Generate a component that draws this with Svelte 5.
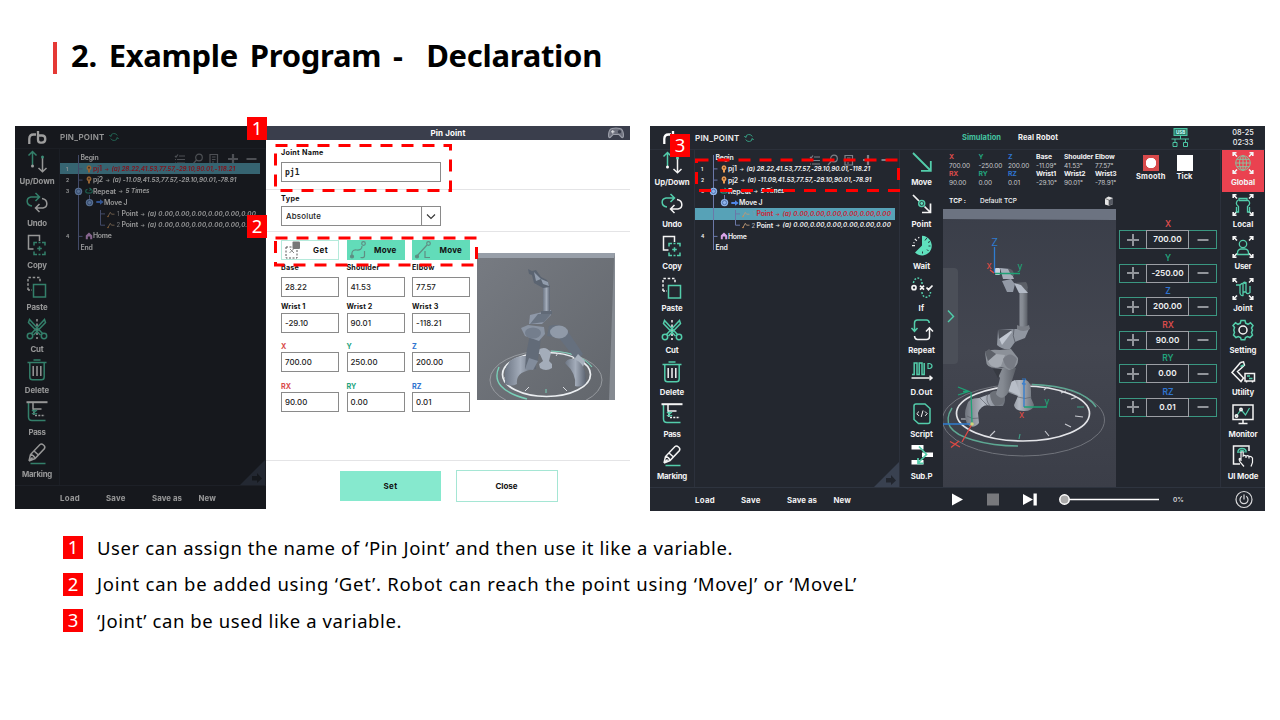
<script>
  // Spreads the letters of a label so that it fills the given width.
  function fit(node, width) {
    const natural = node.getBoundingClientRect().width;
    const count = node.textContent.length;
    if (width && count) node.style.letterSpacing = (width - natural) / count + 'px';
  }

  const editTools = [
    ['updown', 'Up/Down', 35], ['undo', 'Undo', 19.5], ['copy', 'Copy', 19.5], ['paste', 'Paste', 21],
    ['cut', 'Cut', 13], ['delete', 'Delete', 24.5], ['pass', 'Pass', 17], ['marking', 'Marking', 30]
  ];
  const commands = [
    ['move', 'Move', 20.5], ['point', 'Point', 20], ['wait', 'Wait', 17], ['if', 'If', 6],
    ['repeat', 'Repeat', 26.5], ['dout', 'D.Out', 22], ['script', 'Script', 22.5], ['subp', 'Sub.P', 21.5]
  ];
  const views = [
    ['global', 'Global', 24], ['local', 'Local', 20.5], ['user', 'User', 17], ['joint', 'Joint', 19.5],
    ['setting', 'Setting', 27], ['utility', 'Utility', 22], ['monitor', 'Monitor', 29], ['uimode', 'UI Mode', 30.5]
  ];
  const zeros = '(a) 0.00,0.00,0.00,0.00,0.00,0.00';
  const tree = [
    { x: 20.5, label: 'Begin', w: 18 },
    { n: '1', x: 25, icon: 'pin', label: 'pj1', w: 9, value: '(a) 28.22,41.53,77.57,-29.10,90.01,-118.21', vw: 123.5 },
    { n: '2', x: 25, icon: 'pin', label: 'pj2', w: 10, value: '(a) -11.09,41.53,77.57,-29.10,90.01,-78.91', vw: 124 },
    { n: '3', x: 25, icon: 'loop', label: 'Repeat', w: 23, value: '5 Times', vw: 24 },
    { x: 36, icon: 'go', label: 'Move J', w: 23.5 },
    { x: 47, icon: 'path', idx: '1', label: 'Point', w: 16.5, value: zeros, vw: 108.5 },
    { x: 47, icon: 'path', idx: '2', label: 'Point', w: 16.5, value: zeros, vw: 108.5 },
    { n: '4', x: 25, icon: 'home', label: 'Home', w: 18.5 },
    { x: 20.5, label: 'End', w: 12 }
  ];
  const files = [['Load', 20, 46], ['Save', 19.5, 46], ['Save as', 30, 46.5], ['New', 17.5, 20]];
  const readouts = [
    ['X', '700.00', 'RX', '90.00', 'red'], ['Y', '-250.00', 'RY', '0.00', 'green'], ['Z', '200.00', 'RZ', '0.01', 'blue'],
    ['Base', '-11.09°', 'Wrist1', '-29.10°', ''], ['Shoulder', '41.53°', 'Wrist2', '90.01°', ''], ['Elbow', '77.57°', 'Wrist3', '-78.91°', '']
  ];
  const jogs = [
    ['X', '700.00', 'red'], ['Y', '-250.00', 'green'], ['Z', '200.00', 'blue'],
    ['RX', '90.00', 'red'], ['RY', '0.00', 'green'], ['RZ', '0.01', 'blue']
  ];
  const fields = [
    ['Base', '28.22', '', 18], ['Shoulder', '41.53', '', 33], ['Elbow', '77.57', '', 22.5],
    ['Wrist 1', '-29.10', '', 24.5], ['Wrist 2', '90.01', '', 26], ['Wrist 3', '-118.21', '', 26.5],
    ['X', '700.00', 'red', 0], ['Y', '250.00', 'green', 0], ['Z', '200.00', 'blue', 0],
    ['RX', '90.00', 'red', 0], ['RY', '0.00', 'green', 0], ['RZ', '0.01', 'blue', 0]
  ];
  const notes = [
    ['User can assign the name of ‘Pin Joint’ and then use it like a variable.', 636],
    ['Joint can be added using ‘Get’. Robot can reach the point using ‘MoveJ’ or ‘MoveL’', 760],
    ['‘Joint’ can be used like a variable.', 305]
  ];
</script>

{#snippet corners()}
  <g class="w" stroke-width="1.600"><path d="M5 5.500L1.500 2M1.200 5V1.800H4.500M17 5.500L20.500 2M17.500 1.800H20.800V5M5 18.500L1.500 22M1.200 19V22.200H4.500M17 18.500L20.500 22M20.800 19V22.200H17.500" /></g>
{/snippet}

{#snippet icon(name)}
  <svg class="icon" viewBox="0 0 22 22" width="22" height="22">
    {#if name === 'updown'}
      <g class="g"><path d="M6.500 15V1.500M2.500 5.500L6.500 1.500L10.500 5.500" /></g>
      <g class="w"><path d="M16.500 8V21.500M12.500 18L16.500 21.800L20.500 18" /></g>
      <circle class="wf" cx="6.500" cy="16" r="1.500" /><circle class="gf" cx="16.500" cy="7" r="1.500" />
    {:else if name === 'undo'}
      <g class="g"><path d="M6 14C0 13.500-.5 6 5 5H13.500M9.500 1L13.500 5L9.500 9" /></g>
      <g class="w"><path d="M16 6.500C22 7.500 22.500 15 17 16H9.500M13.500 12L9.500 16L13.500 20" /></g>
    {:else if name === 'copy'}
      <g class="w"><path d="M7.500 15H2.500V1.500H13.500V7" /></g>
      <g class="g"><path d="M8 11.500V8.500H11M16 8.500H19V11.500M19 17.500V20.500H16M11 20.500H8V17.500M12.500 8.500H14.500M12.500 20.500H14.500M13.500 12.200V16.800M11.200 14.500H15.800" /></g>
    {:else if name === 'paste'}
      <g class="w"><path d="M2 14V1.500H14V6.500" stroke-dasharray="2.500 1.800" /><path d="M2 14H6" stroke-dasharray="2 1.500" /></g>
      <g class="g"><rect x="7.500" y="8.500" width="12" height="12.500" /></g>
    {:else if name === 'cut'}
      <path class="w" d="M11 1V21" stroke-dasharray="2.500 2" />
      <g class="g"><circle cx="4" cy="18" r="2.700" /><circle cx="18" cy="18" r="2.700" /><path d="M5.500 15.500L18.500 1.500L19.500 4.500L7.500 17M16.500 15.500L3.500 1.500L2.500 4.500L14.500 17" /></g>
    {:else if name === 'delete'}
      <g class="g"><path d="M1.500 3.500H20.500M7.500 1H14.500M3.800 4V18Q3.800 20.800 6.500 20.800H15.500Q18.200 20.800 18.200 18V4" /></g>
      <path class="w" d="M7.200 7V17M11 7V17M14.800 7V17" />
    {:else if name === 'pass'}
      <path class="g" d="M2.500 2V16Q2.500 19.500 6 19.500H19.500" />
      <path class="w" d="M.5 1.200H21.500" stroke-width="2" /><path class="w" d="M7 2V8H15.500M8 8V14" />
      <path class="w" d="M9 14.500H19" stroke-dasharray="2 1.300" /><path class="g" d="M6 9L11 13M11 9L6 13M8.500 8.500V14" />
    {:else if name === 'marking'}
      <g class="w"><path d="M3 18L4.500 11.500L14 1.500Q15.500.5 17.500 2T18.500 5.500L9 15.500L3 18M4.500 11.500Q8 12 9 15.500M8 8L12.500 12M3 18L6.500 14.500" /></g>
      <path class="g" d="M4.500 20.500H19.500" />
    {:else if name === 'move'}
      <path class="g" d="M2 2L19.500 19.500M19.800 10V19.800H10" stroke-width="1.800" />
    {:else if name === 'point'}
      <path class="w" d="M2 2L8 8M13.500 13.500L19 19M19.500 10.500V19.500H11" stroke-width="1.700" />
      <circle class="g" cx="10.700" cy="10.500" r="3" /><circle class="gf" cx="10.700" cy="10.500" r="1.400" />
    {:else if name === 'wait'}
      <path class="gf" d="M11 .8A9.800 9.800 0 1 1 4 17.500L11 10.600Z" />
      <path class="w" d="M1 10.600H4M3.800 3.800L5.800 5.800M2.500 7.500L3.500 8M7.500 2L8 3.200" stroke-width="1.200" />
      <path d="M14 5.500L16 2.700M17 7.500L19 6.500M17.500 11H19.500M16 14.500L17.500 16M11.500 16.500V18.500" stroke="#23272f" stroke-width=".9" />
    {:else if name === 'if'}
      <path class="g" d="M2.500 6C3-.5 11-.5 11 6V15C11 22 19.500 22 19.500 15" stroke-dasharray="1.800 1.500" />
      <rect x="0" y="7.500" width="22" height="6.500" fill="#23272f" />
      <g class="w" stroke-width="1.700"><circle cx="3" cy="10.700" r="2" /><path d="M9 8.700L13 12.700M13 8.700L9 12.700M15.500 10.500L17.500 12.700L21.500 8.500" /></g>
    {:else if name === 'repeat'}
      <g class="g"><path d="M3.500 12V4Q3.500 1 6.500 1H15.500Q18 1 18.300 4M.5 9L3.500 12.300L6.500 9" /></g>
      <g class="w"><path d="M18.500 9V17.500Q18.500 20.500 15.500 20.500H6.500Q3.800 20.500 3.500 17M15 12.500L18.500 8.800L22 12.500" /></g>
    {:else if name === 'dout'}
      <path class="g" d="M1 13.500H3.200V2H6V13.500H8.200V2H11V13.500H13.200V2" /><path class="g" d="M17 2.500V7.500H18.500Q21 7 21 5T18.500 2.500Z" stroke-width="1.200" />
      <path class="w" d="M.5 17H21M18.500 14.800L21 17L18.500 19.200" />
    {:else if name === 'script'}
      <path class="g" d="M3 3Q3 1 5 1H14L19 5.500V18.500Q19 20.500 17 20.500H7.500L3 16.500Z" />
      <path class="w" d="M8 8.500L5.800 10.700L8 12.900M14 8.500L16.200 10.700L14 12.900M12 7.500L10.200 14" stroke-width="1" />
    {:else if name === 'subp'}
      <g class="wf"><rect x=".5" y="0" width="12" height="4.500" /><rect x="11" y="7.500" width="11" height="4.500" /><rect x=".5" y="15" width="12" height="4.500" /></g>
      <path class="g" d="M8 1.500L15.500 9.500L7 18M7 13V18.300H12.500" stroke-width="1.700" />
    {:else if name === 'global'}
      {@render corners()}
      <g stroke="#8fbf9d" fill="none" stroke-width="1"><circle cx="11" cy="12" r="7.300" /><ellipse cx="11" cy="12" rx="3.500" ry="7.300" /><path d="M11 4.700V19.300M3.700 12H18.300M4.800 8.300H17.200M4.800 15.700H17.200" /></g>
    {:else if name === 'local'}
      {@render corners()}
      <g class="g" stroke-width="1.300"><path d="M7 7.500V5.500H15V7.500H7M7 6.500C3.500 8.500 3.500 11.500 6.500 13.500V19H4.500V14M15 6.500C18.500 8.500 18.500 11.500 15.500 13.500V19H17.500V14" /></g>
    {:else if name === 'user'}
      {@render corners()}
      <g class="g" stroke-width="1.300"><circle cx="11" cy="9" r="3.700" /><path d="M5.500 19.500V18Q5.500 14.500 9 14H13Q16.500 14.500 16.500 18V19.500Z" /></g>
    {:else if name === 'joint'}
      {@render corners()}
      <g class="g" stroke-width="1.300"><path d="M4 8H8V16Q8.500 19 11 18.500V7Q11.500 4.500 14 5.500V15Q15 18 18 15.500V9M8 8Q10 5.500 14 6.500M11 15H14" /></g>
    {:else if name === 'setting'}
      <path class="g" d="M9 1.500H13L13.700 4.300L16 5.300L18.500 3.800L21 6.500L19.500 9L20.500 11L19.500 13.500L20.500 16L18 18.500L15.500 17.500L13.500 18.500L12.800 20.800H9.200L8.500 18.500L6.300 17.500L4 18.500L1.500 16L2.500 13.500L1.800 11L2.500 8.500L1 6.500L3.500 3.800L6 5.300L8.300 4.300Z" />
      <circle class="w" cx="11" cy="11" r="4" />
    {:else if name === 'utility'}
      <path class="w" d="M8.500 1.500L11.500.8L12.500 4L9.500 7L5.500 10.500L11.500 17L9 20.500L0 11.500L8.500 1.500M13 12.500H22.500V20H13ZM14.500 20V21.500M20.500 20V21.500" />
      <path class="g" d="M8.500 5.500L12 4M15 15H18M17 17.500H20.500" />
    {:else if name === 'monitor'}
      <path class="w" d="M1 2H21V16.500H1ZM11 17V20M6.500 20.500H15.500" />
      <path class="g" d="M4.500 13L9 6.500L13.500 12L17.500 5" stroke-width="1.200" /><circle class="w" cx="4.500" cy="13" r="1.200" /><circle class="w" cx="9" cy="6.500" r="1.200" />
    {:else if name === 'uimode'}
      <path class="w" d="M8 19H1.500V1H17V6" />
      <path class="g" d="M6 8Q5.500 3.500 10 3.500T14 7.500M8 8Q8 5.500 10 5.500T12 7.500" />
      <path class="w" d="M9 16V7.500Q10 6 11.200 7.500V11Q12.500 9.800 14 11.200Q15.500 10 17 11.500Q19 10.800 20.500 13V17.500L19 21.500M9.500 14.500L7.500 13.500Q6.500 14.500 8.500 17.500L12 21.500M14 11V13M17 11.500V13.500" stroke-width="1.200" />
    {/if}
  </svg>
{/snippet}

{#snippet toolColumn(items, cls)}
  <nav class="tools {cls}">
    {#each items as [name, label, w]}
      <div class="tool" class:on={name === 'global'}>
        {@render icon(name)}
        <span><b use:fit={w}>{label}</b></span>
      </div>
    {/each}
  </nav>
{/snippet}

{#snippet glyph(name)}
  <svg class="glyph" viewBox="0 0 8 8" width="8" height="8">
    {#if name === 'pin'}
      <path d="M4 .2A2.600 2.600 0 0 1 5.600 4.700L5 5.200V7.600H3V5.200L2.400 4.700A2.600 2.600 0 0 1 4 .2" fill="#ee9f55" /><circle cx="4" cy="2.700" r=".9" fill="#6a4020" />
    {:else if name === 'loop'}
      <path d="M2.500 2.300Q.7 2.500.7 4.200T2.500 6H5.500Q7.300 6 7.300 4.200T5.500 2.300M4.500 1L6 2.300L4.500 3.600" fill="none" stroke="#2fa486" stroke-width="1.100" />
    {:else if name === 'go'}
      <path d="M.3 3.100H4V1.200L7.600 4L4 6.800V4.900H.3Z" fill="#4f86e8" />
    {:else if name === 'path'}
      <path d="M1 6.500L3.300 2.300L4.500 4.200H7.500" fill="none" stroke="#b79a7a" stroke-width=".9" /><circle cx="1" cy="6.500" r=".8" fill="#d08a4a" />
    {:else if name === 'home'}
      <path d="M.8 7.300V3.500L4 .6L7.200 3.500V7.300H5.200V4.500H2.800V7.300Z" fill="#d9a3e6" />
    {/if}
  </svg>
{/snippet}

{#snippet program(selected)}
  <section class="program">
    <div class="treebar">
      <svg viewBox="0 0 84 12" width="84" height="12" fill="none" stroke="#7c8087" stroke-width="1.200">
        <path d="M1 3L2 4L4 1.500M5 3H11M3 6.500H11M3 10H11M1 6.500H2M1 10H2" />
        <circle cx="25" cy="4.500" r="3.300" /><path d="M22.500 7L19 11" />
        <path d="M36 1.500H43.500V11H36ZM38 4H41.500M38 6.500H41.500M38 9H40" />
        <path d="M59 1V11M54 6H64M72.500 6H82.500" stroke-width="2.200" />
      </svg>
    </div>
    <div class="rows">
      {#each tree as row, i}
        <div class="row" class:selected={i === selected}>
          <span class="num">{row.n ?? ''}</span>
          <div class="entry" style="margin-left:{row.x - 18}px">
            {#if row.icon}{@render glyph(row.icon)}{/if}
            {#if row.idx}<i class="idx">{row.idx}</i>{/if}
            <span class="name"><b use:fit={row.w}>{row.label}</b></span>
            {#if row.value}
              <span class="arrow">→</span>
              <span class="val"><em use:fit={row.vw}>{row.value}</em></span>
            {/if}
          </div>
        </div>
      {/each}
      <svg class="lines" viewBox="0 0 60 104" width="60" height="104" fill="none" stroke="#6b78a8" stroke-width="1">
        <path d="M18.500 5V100M19 18.900H22.500M19 30.100H22.500M19 86.400H22.500M29.500 45V50M40.500 60V75.200H45M40.500 63.900H45" />
        {#each [[18.500, 41.400], [29.500, 52.600]] as [cx, cy]}
          <g stroke="none"><circle {cx} {cy} r="3.700" fill="#8fb4ea" /><circle {cx} {cy} r="2.100" fill="none" stroke="#3a5a98" stroke-width=".7" /></g>
        {/each}
      </svg>
    </div>
    <svg class="fold" viewBox="0 0 25 25" width="25" height="25"><path d="M25 0V25H0Z" fill="#394150" /><path d="M12 16H17V13L22 18.500L17 23V20.500H12Z" fill="#22262e" /></svg>
  </section>
{/snippet}

{#snippet brand()}
  <div class="brand">
    <svg viewBox="0 0 19 13" width="19" height="13" fill="none" stroke="#fff" stroke-width="2.300"><path d="M1.300 13V8Q1.300 3.500 5.500 3.500H8M10 0V8.500M10 4.500H14Q17.300 4.500 17.300 8T14 11.700H12.500Q10 11.700 10 8.500" /></svg>
  </div>
  <span class="file"><b use:fit={44.5}>PIN_POINT</b></span>
  <svg class="sync" viewBox="0 0 10 10" width="10" height="10" fill="none" stroke="#35997f" stroke-width="1"><path d="M1.500 4A3.700 3.700 0 0 1 8.300 3.500M8.500 6A3.700 3.700 0 0 1 1.700 6.500M.3 3L1.500 4.500L3 3.500M9.700 7L8.500 5.500L7 6.500" /></svg>
{/snippet}

{#snippet fileMenu()}
  <div class="files">
    {#each files as [label, w, step]}<span style="width:{step}px"><b use:fit={w}>{label}</b></span>{/each}
  </div>
{/snippet}

{#snippet badge(n, cls)}<span class="badge {cls}">{n}</span>{/snippet}

<main class="slide">
  <h1><span use:fit={531}>2. Example Program -&nbsp; Declaration</span></h1>

  <div class="shots">
    <figure class="shot first">
      <div class="dimmed app">
        <header>{@render brand()}</header>
        <div class="body">{@render toolColumn(editTools, 'edit')}{@render program(1)}</div>
        <footer>{@render fileMenu()}</footer>
      </div>
      <div class="dialog">
        <div class="caption">
          <span></span><b use:fit={35}>Pin Joint</b>
          <svg viewBox="0 0 16 12" width="16" height="12"><path d="M4 1.500Q8 .5 12 1.500Q15 2 15.500 8Q15.500 11 13.800 10.500L11 7.500H5L2.200 10.500Q.5 11 .5 8Q1 2 4 1.500" fill="#6d707d" stroke="#9a9da8" stroke-width="1.200" /><path d="M3 4.800H6.500M4.800 3V6.600" stroke="#e0e1e5" /><circle cx="11.500" cy="4.800" r="1.700" fill="#3a3e4c" /></svg>
        </div>
        <div class="block joint">
          <label><b use:fit={42.5}>Joint Name</b></label>
          <div class="input mono">pj1</div>
        </div>
        <div class="block type">
          <label><b use:fit={19}>Type</b></label>
          <div class="input select"><span use:fit={35}>Absolute</span><svg viewBox="0 0 19 18" width="19" height="18" fill="none" stroke="#333" stroke-width="1.100"><path d="M.5 0V18" stroke="#8a8a8a" /><path d="M6 7.500L10 11.500L14 7.500" /></svg></div>
        </div>
        <div class="pose">
          <div class="left">
            <div class="actions">
              <button class="get"><svg viewBox="0 0 20 20" width="20" height="20"><rect x="2" y="7" width="11" height="11" fill="none" stroke="#555" stroke-dasharray="2 1.500" /><rect x="8.500" y="1.500" width="7.500" height="7.500" rx="1" fill="#777" /><path d="M5.500 13L9.500 9M6 9L10 13" stroke="#888" /></svg><b use:fit={15}>Get</b></button>
              <button><svg viewBox="0 0 20 20" width="20" height="20" fill="none" stroke="#5f8e83" stroke-width="1.200"><path d="M3 16Q2 9.500 7.500 10T13 6M15.500 11V16Q15.500 18 11.500 17.500" /><circle cx="14.500" cy="3.500" r="1.800" /><circle cx="3" cy="16.500" r="1.500" fill="#5f8e83" /></svg><b use:fit={22.5}>Move</b></button>
              <button><svg viewBox="0 0 20 20" width="20" height="20" fill="none" stroke="#5f8e83" stroke-width="1.200"><path d="M3 16L13 5M11 11V17.500H16" /><circle cx="14.500" cy="3.500" r="1.800" /><circle cx="3" cy="16.500" r="1.500" fill="#5f8e83" /></svg><b use:fit={22.5}>Move</b></button>
            </div>
            <div class="fields">
              {#each fields as [label, value, tone, w]}
                <div class="field"><label class={tone}><b use:fit={w}>{label}</b></label><div class="input">{value}</div></div>
              {/each}
            </div>
          </div>
          <svg class="render" viewBox="477 253 138 147" width="138" height="147">
            <defs>
              <linearGradient id="bgA" x1="0" y1="0" x2="1" y2="1"><stop offset="0" stop-color="#777b82" /><stop offset="1" stop-color="#62666c" /></linearGradient>
              <linearGradient id="mA" x1="0" x2="1"><stop offset="0" stop-color="#6e7785" /><stop offset=".5" stop-color="#a3acba" /><stop offset="1" stop-color="#5b6370" /></linearGradient>
            </defs>
            <rect x="477" y="253" width="138" height="147" fill="url(#bgA)" />
            <path d="M477 253H615V258H477Z" fill="#989fa9" /><path d="M615 253V400H609L614 258Z" fill="#858a91" />
            <g fill="none">
              <ellipse cx="546" cy="380" rx="56" ry="29" stroke="#a2a6ab" stroke-width=".8" />
              <path d="M499 367Q489 389 527 399" stroke="#79d0b8" stroke-width="1.400" /><path d="M551 351Q580 352 592 367" stroke="#79d0b8" stroke-width="1.200" />
              <ellipse cx="546.500" cy="374.500" rx="44" ry="22" stroke="#eceff2" stroke-width="1.700" />
              <path d="M525 391L529 387M563 387L567 391M504 378H509M556 356L558 353M571 360L574 358" stroke="#d8dbe0" /><path d="M546 389V393" stroke="#79d0b8" />
            </g>
            <path d="M538 350Q546 345 551 353L549 361L552 364V368Q546 372 540 368L539 364L543 361Z" fill="#a4adba" />
            <path d="M549 326Q560 323 567 330L583 354L577 361L559 338L547 336Z" fill="#66707e" /><ellipse cx="559" cy="332" rx="9" ry="6.500" fill="#909aa8" />
            <path d="M578 354L585 361L583 367L573 361Z" fill="#a9b2be" />
            <path d="M565 363Q568 357 576 360Q586 364 586 383Q582 388 575 386Q577 374 565 363" fill="url(#mA)" />
            <path d="M523 356Q508 357 505 371V384Q511 387 517 384Q515 371 536 369L534 357Z" fill="url(#mA)" />
            <path d="M530 334L541 338L538 360Q532 370 525 369L526 355Z" fill="#626b78" /><path d="M529 358L538 361L533 370L525 369Z" fill="#828c9b" />
            <path d="M521 328L528 325L544 327L545 334L539 341L525 336Z" fill="#8a94a3" /><ellipse cx="533" cy="333" rx="8" ry="5.500" fill="#747e8d" />
            <path d="M530 315L551 310V315L542 324L529 324Z" fill="#8e98a8" /><path d="M538 314L530 324L544 322L551 314Z" fill="#6a7482" />
            <rect x="543" y="286" width="7" height="27" fill="url(#mA)" /><path d="M541 311H552V314H541Z" fill="#616a77" />
            <path d="M528 269L532 271L536 270L541 277L547 280L550 287L543 288L534 283L532 275L529 274Z" fill="#5b6471" /><path d="M534 272L541 279L536 281ZM541 279L548 282L549 286L543 284Z" fill="#929dad" />
          </svg>
        </div>
        <div class="confirm"><button class="set"><b use:fit={14}>Set</b></button><button class="close"><b use:fit={22}>Close</b></button></div>
      </div>
      <svg class="marks" viewBox="0 0 615 383" width="615" height="383" fill="none" stroke="#f00" stroke-width="3" stroke-dasharray="12 9">
        <rect x="260.500" y="19.500" width="175" height="45" /><rect x="260.500" y="112" width="201" height="27" />
      </svg>
      {@render badge(1, 'b1')}{@render badge(2, 'b2')}
    </figure>

    <figure class="shot second">
      <div class="app">
        <header>
          {@render brand()}
          <div class="modes"><b class="sim" use:fit={39}>Simulation</b><b use:fit={40}>Real Robot</b></div>
          <svg class="usb" viewBox="0 0 20 20" width="20" height="20" fill="none" stroke="#4cc5a4" stroke-width="1"><rect x="4" y=".5" width="13" height="7" fill="#2b7c68" /><path d="M10.500 8V11M1.500 11H19M5 11V14.500M15.500 11V14.500M3 14.500H7V18.500H3ZM13.500 14.500H17.500V18.500H13.500Z" /><text x="10.500" y="6">USB</text></svg>
          <div class="clock"><span>08-25</span><span>02:33</span></div>
        </header>
        <div class="body">
          {@render toolColumn(editTools, 'edit')}
          {@render program(5)}
          {@render toolColumn(commands, 'cmd')}
          <section class="stage">
            <div class="readouts">
              <div class="grid">
                {#each readouts as [a, va, b, vb, tone]}
                  <div><b class={tone}>{a}</b><span>{va}</span><b class={tone}>{b}</b><span>{vb}</span></div>
                {/each}
              </div>
              <div class="tcp"><b use:fit={17}>TCP :</b><span use:fit={37}>Default TCP</span><svg viewBox="0 0 10 10" width="10" height="10"><path d="M1 2.500L4.500.5L9 2V8L5 9.800L1 8.500Z" fill="#e5e5e5" /><path d="M5 4L9 2V8L5 9.800Z" fill="#565a63" /><path d="M1 2.500L5 4V9.500" stroke="#444" stroke-width=".6" fill="none" /></svg></div>
            </div>
            <svg class="view" viewBox="943 209 173 278" width="173" height="278">
              <defs>
                <linearGradient id="bgB" x1="0" y1="0" x2="0" y2="1"><stop offset="0" stop-color="#3a3e49" /><stop offset=".5" stop-color="#434650" /><stop offset="1" stop-color="#3b3e48" /></linearGradient>
                <linearGradient id="mB" x1="0" x2="1"><stop offset="0" stop-color="#70757e" /><stop offset=".45" stop-color="#b3b9c3" /><stop offset="1" stop-color="#6a6f78" /></linearGradient>
                <linearGradient id="mC" x1="0" x2="1"><stop offset="0" stop-color="#8b9099" /><stop offset=".4" stop-color="#858a92" /><stop offset="1" stop-color="#5b5f67" /></linearGradient>
              </defs>
              <rect x="943" y="209" width="173" height="278" fill="url(#bgB)" /><path d="M943 209H1116V220L943 219Z" fill="#6c7381" />
              <g fill="none">
                <ellipse cx="1023.500" cy="420" rx="81" ry="36" stroke="#70737b" stroke-width="1" />
                <path d="M952 408Q938 430 973 440Q993 446 1018 446" stroke="#5da893" stroke-width="1.400" /><path d="M1032 384.500Q1082 386 1096 407" stroke="#5da893" stroke-width="1.400" />
                <ellipse cx="1023" cy="413.500" rx="66.500" ry="27.500" stroke="#e3e4e8" stroke-width="1.700" />
                <path d="M990 436L995 431M1045 431L1049 436M1065 424L1071 427M1075 416L1083 417M1071 399L1077 397M1061 393L1066 391M1044 390L1047 387M961 419H967" stroke="#c8cad0" stroke-width="1.100" /><path d="M1020 434L1019 439M1077 407H1084" stroke="#3f9c84" stroke-width="1.200" />
              </g>
              <path d="M1007 384L1016 380H1026Q1031 382 1031 391V398L1034 405Q1033 411 1024 411Q1015 411 1014 405L1018 396L1007 392Z" fill="url(#mB)" /><path d="M1007 384L1015 380L1021 396L1008 391Z" fill="#b8bec8" /><path d="M1018 397Q1025 400 1032 397" stroke="#5a5e66" fill="none" stroke-width=".6" />
              <path d="M967 405Q968 398 979 398L987 395L994 393L1003 392Q1007 400 1003 406L991 406Q982 403 978 413L979 423Q973 430 967 424Q963 414 967 405" fill="url(#mB)" /><path d="M988 394Q985 400 990 406M967 416Q972 420 979 418M980 398L988 406" stroke="#555961" fill="none" stroke-width=".6" />
              <path d="M990 393Q998 387 1005 397Q1004 406 995 406Q990 401 990 393" fill="#6c7078" />
              <path d="M994 369L1012 367L1016 368L1008 393Q1002 402 996 394L1000 378Z" fill="url(#mC)" /><path d="M993 369L1002 369L998 378Z" fill="#373a42" />
              <path d="M985 352Q989 349 1000 350L1011 349L1018 358Q1019 368 1009 370Q1003 366 998 368Q986 369 986 360Z" fill="#8c9199" /><path d="M988 361L996 354L1005 355L1001 366Q992 370 988 361" fill="#a4a9b1" /><path d="M1003 359Q1010 350 1017 359L1014 368Q1006 372 1003 359" fill="#777b84" /><path d="M985 352L989 349L996 354L988 361Z" fill="#5d6169" />
              <path d="M998 330L1014 329L1029 329L1025 338L1015 342L1010 349Q1002 350 997 345Z" fill="#9096a0" /><path d="M1012 332L1002 345L999 338L1010 330Z" fill="#c1c7d1" /><path d="M998 330H1012L999 339Z" fill="#4e525b" /><path d="M1014 329Q1012 336 1015 342" stroke="#4e525b" fill="none" stroke-width=".7" />
              <rect x="1019.500" y="290" width="8" height="38" fill="url(#mC)" /><path d="M1017 325Q1023 328 1029 325L1030 329Q1023 333 1017 329Z" fill="#7a7e86" />
              <path d="M1014 283L1026 282Q1029 286 1027 291L1018 286Z" fill="#5b5f67" /><path d="M1014 283L1021 285L1028 293H1019Z" fill="#b3bac6" />
              <path d="M1002 281L1011 279L1015 284L1013 292H1007Z" fill="#9299a5" /><path d="M1000 268L1010 269L1014 279L1003 279Z" fill="#a6adb9" /><path d="M1008 269Q1014 268 1014 276L1011 275Z" fill="#5b5f67" /><rect x="995" y="268" width="5" height="7" rx="1" fill="#cbd3df" />
              <g fill="none" stroke-width="1.300">
                <path d="M994.500 247V273M943 424H972M1024 380V407" stroke="#2f7cd0" /><path d="M995 273.500H1020M971 392L972 423M1024 407H1047" stroke="#1fa276" /><path d="M994 273L990 270M971.500 425L962 442" stroke="#dc4a44" />
                <path d="M950 441.500L960 447M951 447.500L959 441" stroke="#dc4a44" /><path d="M958 387L969 391.500L958 395M969 391.500H963" stroke="#1fa276" />
                <path d="M1022 379H1026L1022 384H1026" stroke="#2f7cd0" stroke-width=".9" />
              </g>
              <circle cx="972" cy="424" r="1.800" fill="#cfd57a" />
              <g class="axis"><text x="991.500" y="246" fill="#2f7cd0">Z</text><text x="986.500" y="269" fill="#dc4a44">x</text><text x="1017.500" y="270" fill="#1fa276">y</text><text x="1044.500" y="405" fill="#1fa276">y</text><text x="1019" y="418" fill="#dc4a44">x</text></g>
              <path d="M943 268H954Q958 268 958 272V360Q958 364 954 364H943Z" fill="#4b4f58" /><path d="M948 310.500L953.500 316.500L948 322" fill="none" stroke="#4fceab" stroke-width="1.400" />
            </svg>
          </section>
          <section class="jog">
            <div class="options"><div><i class="smooth"></i><b use:fit={29.5}>Smooth</b></div><div><i></i><b use:fit={16}>Tick</b></div></div>
            {#each jogs as [axis, value, tone]}
              <div class="axisrow"><b class={tone}>{axis}</b>
                <div class="stepper"><svg viewBox="0 0 12 12" width="12" height="12"><path d="M6 0V12M0 6H12" /></svg><strong>{value}</strong><svg viewBox="0 0 12 12" width="12" height="12"><path d="M.5 6H11.500" /></svg></div>
              </div>
            {/each}
          </section>
          {@render toolColumn(views, 'nav')}
        </div>
        <footer>
          {@render fileMenu()}
          <svg class="player" viewBox="940 488 325 23" width="325" height="23">
            <path d="M952 493.500L963 499.500L952 505.500Z" fill="#fff" /><rect x="987" y="493.500" width="12" height="12" fill="#77787c" />
            <path d="M1023 494L1033 499.500L1023 505Z" fill="#fff" /><rect x="1033.500" y="493.500" width="3.300" height="12" fill="#fff" />
            <path d="M1065 499.500H1159" stroke="#fff" stroke-width="1.500" /><circle cx="1064.500" cy="499.500" r="4.700" fill="#aaa" stroke="#fff" stroke-width="1.500" />
            <text x="1173" y="502.300">0%</text>
            <g fill="none" stroke="#d8d8da" stroke-width="1.200"><circle cx="1244" cy="499.500" r="8" /><path d="M1241.800 496.300A4 4 0 1 0 1246.200 496.300M1244 494.500V499.500" /></g>
          </svg>
        </footer>
      </div>
      <svg class="marks" viewBox="0 0 615 385" width="615" height="385" fill="none" stroke="#f00" stroke-width="3" stroke-dasharray="12 9"><rect x="46.500" y="34" width="202" height="30.500" /></svg>
      {@render badge(3, 'b3')}
    </figure>
  </div>

  <ol class="notes">
    {#each notes as [text, w], i}
      <li><span class="badge">{i + 1}</span><span class="text" use:fit={w}>{text}</span></li>
    {/each}
  </ol>
</main>

<style>
  :global(body) { margin: 0; background: #fff; }
  .slide { width: 1280px; height: 720px; box-sizing: border-box; padding: 42px 15px 0; background: #fff; overflow: hidden; font-family: Inter, sans-serif; }
  h1 { margin: 0 0 52px 38px; height: 32px; border-left: 4px solid #e53935; padding-left: 14px; font: 700 31px/27px 'Noto Sans', sans-serif; word-spacing: 4px; color: #000; white-space: nowrap; }
  h1 span { display: inline-block; }
  .shots { display: flex; gap: 20px; height: 385px; align-items: flex-start; }
  .shot { margin: 0; position: relative; width: 615px; height: 385px; display: flex; }
  .first { height: 383px; }
  .app { display: flex; flex-direction: column; width: 615px; background: #23272f; color: #f2f2f3; }
  .dimmed { width: 251px; filter: brightness(.62); flex: none; overflow: hidden; }
  header { display: flex; align-items: center; height: 24px; box-sizing: border-box; border-bottom: 1px solid #2b303a; flex: none; }
  .dimmed header { height: 23px; }
  .brand { width: 45px; display: flex; justify-content: center; flex: none; }
  .brand svg { display: block; }
  .file { width: 49px; font-size: 8px; line-height: 12px; flex: none; }
  .file b, .name b { font-weight: 600; }
  b { font-weight: 700; display: inline-block; white-space: nowrap; }
  .body { display: flex; flex: 1; min-height: 0; }
  .tools { width: 45px; flex: none; display: flex; flex-direction: column; border-right: 1px solid #2c313c; box-sizing: border-box; padding-bottom: 1px; }
  .cmd { width: 43px; border-right: 0; }
  .nav { width: 44px; border-right: 0; }
  .tool { flex: 1; min-height: 0; display: flex; flex-direction: column; align-items: center; padding-top: 1px; box-sizing: border-box; }
  .tool.on { background: #ea4250; margin: 0 1px; }
  .tool span { height: 10px; line-height: 10px; margin-top: 4px; font-size: 7.800px; white-space: nowrap; }
  .icon { display: block; fill: none; stroke-width: 1.500; flex: none; overflow: visible; }
  .g { stroke: #53cdab; fill: none; }
  .w { stroke: #f4f4f4; fill: none; }
  .gf { fill: #5fe0bd; stroke: none; }
  .wf { fill: #fff; stroke: none; }
  .program { position: relative; width: 206px; flex: none; border-right: 1px solid #2c313c; box-sizing: border-box; }
  .second .program { width: 205px; }
  .treebar { position: absolute; left: 114px; top: 4px; height: 12px; }
  .treebar svg { display: block; }
  .rows { position: relative; padding-top: 2px; font-size: 6.900px; }
  .dimmed .rows { padding-top: 3px; }
  .lines { position: absolute; left: 0; top: 0; }
  .dimmed .lines { top: 1px; }
  .row { display: flex; align-items: center; height: 11.250px; width: 200px; white-space: nowrap; }
  .dimmed .row { height: 11.200px; }
  .row.selected { background: #57a2b7; }
  .selected .val, .selected .arrow, .selected .name { color: #d02030; }
  .num { width: 18px; box-sizing: border-box; padding-left: 6px; font-size: 5px; font-weight: 600; flex: none; }
  .entry { display: flex; align-items: center; }
  .glyph { display: block; }
  .idx { width: 6.500px; font-style: normal; font-size: 6px; text-align: center; color: #b9bbc0; }
  .selected .idx { color: #7d9ba6; }
  .arrow { width: 9.500px; text-align: center; font-size: 5px; }
  .val { font-size: 6.300px; }
  .val em { display: inline-block; font-style: italic; font-weight: 600; }
  .fold { position: absolute; right: 0; bottom: 0; display: block; }
  footer { display: flex; align-items: center; height: 24px; box-sizing: border-box; border-top: 1px solid #2e343f; flex: none; }
  .files { display: flex; padding-left: 45px; width: 290px; box-sizing: border-box; font-size: 7.800px; line-height: 10px; flex: none; }
  .files span { white-space: nowrap; }
  .player { display: block; flex: none; }
  .player text { font: 600 6.500px Inter, sans-serif; fill: #d8d8da; }

  .dialog { width: 364px; display: flex; flex-direction: column; background: #fff; color: #111; font-size: 8px; }
  .caption { height: 14px; background: #3a3e4c; display: grid; grid-template-columns: 1fr auto 1fr; align-items: center; color: #fff; padding-right: 6px; padding-left: 6px; }
  .caption svg { justify-self: end; }
  .block { box-sizing: border-box; padding-left: 15px; border-bottom: 1.500px solid #e4e4e6; }
  .block label, .field label { display: block; font-size: 7.200px; line-height: 10px; height: 10px; white-space: nowrap; }
  .joint { height: 50px; padding-top: 8px; }
  .type { height: 42px; padding-top: 3.500px; }
  .input { box-sizing: border-box; border: 1px solid #8a8a8a; height: 20px; line-height: 18px; padding-left: 3px; font-size: 7.900px; font-weight: 500; color: #222; white-space: nowrap; }
  .block .input { width: 160px; margin-top: 4px; }
  .type .input { margin-top: 2px; }
  .mono { font: 700 8px/19px 'DejaVu Sans Mono', monospace; }
  .select { display: flex; justify-content: space-between; padding-left: 4px; }
  .pose { display: flex; height: 229px; box-sizing: border-box; padding-left: 15px; gap: 7px; border-bottom: 1.500px solid #e4e4e6; }
  .left { width: 189px; padding-top: 8px; }
  .actions, .fields { display: grid; grid-template-columns: 58px 58px 58px; column-gap: 7.500px; }
  .actions button { height: 20px; border: 0; background: #62dcb9; display: flex; align-items: center; justify-content: space-between; padding: 0 8px 0 2px; font: 700 8px Inter, sans-serif; color: #111; }
  .actions .get { background: #fff; border: 1px solid #b5eadb; padding-right: 10px; }
  .fields { margin-top: 2.500px; grid-auto-rows: 39.800px; }
  .field:nth-child(-n + 6) .input { margin-top: 1px; }
  .field:nth-child(-n + 3) .input { margin-top: 4px; }
  .red { color: #d94b4b; }
  .green { color: #22a37d; }
  .blue { color: #2f74d0; }
  .render { display: block; margin-top: 21px; flex: none; }
  .confirm { display: flex; gap: 14.500px; padding: 8.500px 0 0 74px; }
  .confirm button { box-sizing: border-box; font: 700 8px Inter, sans-serif; color: #111; padding: 0; }
  .set { width: 101px; height: 30px; background: #86e9ce; border: 0; margin-top: 1px; }
  .close { width: 102px; height: 32px; background: #fff; border: 1.500px solid #a5e6d4; }

  .sync { flex: none; }
  .modes { display: flex; gap: 17px; margin-left: 208px; width: 214px; flex: none; font-size: 7.500px; }
  .sim { color: #43c3a0; }
  .usb { display: block; margin-left: -6px; flex: none; }
  .usb text { font: 700 4.500px Inter, sans-serif; fill: #cff; stroke: none; text-anchor: middle; }
  .clock { display: flex; flex-direction: column; width: 44px; margin-left: auto; text-align: center; font-size: 7.300px; line-height: 9.500px; font-weight: 500; }
  .stage { width: 173px; flex: none; display: flex; flex-direction: column; }
  .readouts { height: 59px; padding: 3px 0 0 6px; box-sizing: border-box; font-size: 6.800px; flex: none; }
  .grid { display: grid; grid-template-columns: 29.500px 29.500px 28px 28px 31px 20px; }
  .grid div { display: flex; flex-direction: column; line-height: 8.700px; height: 36px; letter-spacing: -.1px; }
  .grid span { color: #c6c7cb; white-space: nowrap; font-size: 6.500px; }
  .tcp { display: flex; align-items: center; height: 17px; margin-top: 3px; font-size: 6.500px; }
  .tcp b { margin-right: 14px; }
  .tcp span { white-space: nowrap; font-weight: 500; }
  .tcp svg { margin-left: auto; margin-right: 2px; }
  .view { display: block; flex: none; }
  .axis text { font: 400 10.500px Roboto, sans-serif; }
  .jog { width: 105px; flex: none; border-right: 1px solid #2c313c; box-sizing: border-box; display: flex; flex-direction: column; }
  .options { display: flex; align-items: flex-start; gap: 11px; height: 68px; padding: 5px 0 0 20px; box-sizing: border-box; font-size: 7.500px; flex: none; }
  .options div { display: flex; flex-direction: column; align-items: center; line-height: 12px; }
  .options i { width: 16px; height: 16px; background: #fff; display: block; }
  .options .smooth { background: radial-gradient(circle, #fff 5px, #d84a4b 5.500px); }
  .axisrow { height: 33.500px; padding-left: 3px; width: 98px; text-align: center; font-size: 8.500px; line-height: 12px; flex: none; }
  .axisrow > b { display: block; font-weight: 600; }
  .stepper { height: 19px; box-sizing: border-box; border: 1px solid #3a9781; display: grid; grid-template-columns: 26px 43px 1fr; align-items: stretch; }
  .stepper strong { border: 1px solid #9c9fa5; margin: -1px 0; font-size: 8.200px; line-height: 17px; font-weight: 600; }
  .stepper svg { place-self: center; stroke: #92959b; stroke-width: 2; }

  .marks { position: absolute; left: 0; top: 0; overflow: visible; }
  .badge { display: block; width: 20px; height: 23px; background: #f00; color: #fff; text-align: center; font: 400 18.500px/22px 'Noto Sans', sans-serif; flex: none; }
  .shot .badge { position: absolute; }
  .b1 { left: 232px; top: -9px; }
  .b2 { left: 232px; top: 89px; }
  .b3 { left: 20px; top: 8px; }
  .notes { list-style: none; margin: 18.500px 0 0 48px; padding: 0; }
  .notes li { display: flex; align-items: center; height: 36.500px; }
  .text { margin-left: 14px; font: 400 18.500px/24px 'Noto Sans', sans-serif; color: #000; white-space: nowrap; }
</style>
